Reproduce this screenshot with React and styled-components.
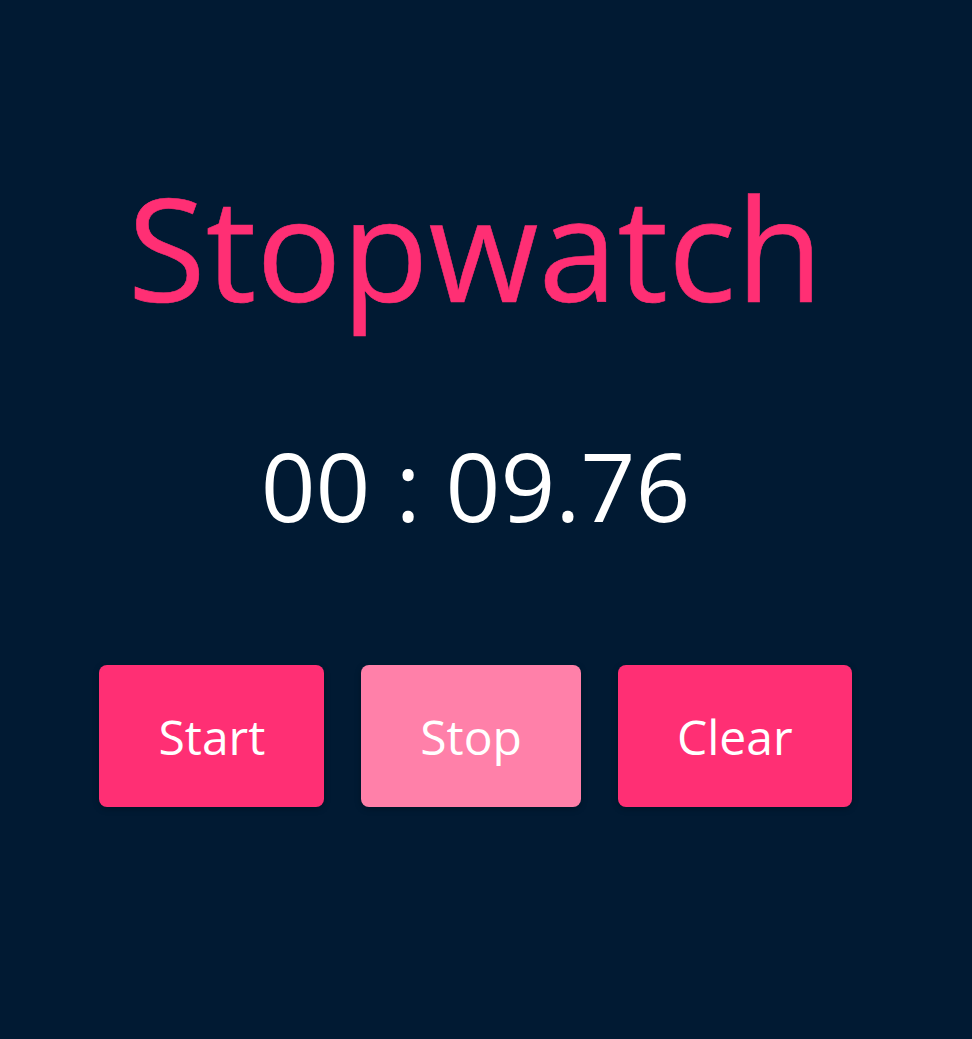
import React, { useState, useRef, useEffect } from 'react';
import styled, { createGlobalStyle } from 'styled-components';

const GlobalStyle = createGlobalStyle`
  html, body {
    margin: 0;
    padding: 0;
    background: #011a33;
  }
  body {
    font-family: "Open Sans", "Noto Sans", sans-serif;
  }
`;

const Page = styled.div`
  min-height: 1039px;
  box-sizing: border-box;
  padding: 162px 21px 0 0;
  display: flex;
  flex-direction: column;
  align-items: center;
`;

const Title = styled.h1`
  margin: 0;
  font-size: 142px;
  font-weight: 400;
  line-height: 170px;
  color: #ff2f74;
  -webkit-text-stroke: 0.6px #ff2f74;
`;

const Time = styled.div`
  margin-top: 95px;
  font-size: 96px;
  line-height: 115px;
  color: #fff;
`;

const Controls = styled.div`
  margin-top: 123px;
  display: flex;
  gap: 37px;
`;

const Button = styled.button`
  height: 142px;
  padding: 0 59px;
  border: none;
  border-radius: 8px;
  font-family: inherit;
  font-size: 48px;
  color: #fff;
  cursor: pointer;
  background: ${p => (p.$muted ? '#ff80a9' : '#ff2f74')};
  box-shadow: 0 2px 6px rgba(0, 0, 0, 0.25);
`;

const pad = n => String(n).padStart(2, '0');

export default function App() {
  const [ms, setMs] = useState(9760);
  const [running, setRunning] = useState(false);
  const ref = useRef(null);

  useEffect(() => {
    if (!running) return;
    ref.current = setInterval(() => setMs(v => v + 10), 10);
    return () => clearInterval(ref.current);
  }, [running]);

  const mins = Math.floor(ms / 60000);
  const secs = Math.floor((ms % 60000) / 1000);
  const cs = Math.floor((ms % 1000) / 10);

  return (
    <Page>
      <GlobalStyle />
      <Title>Stopwatch</Title>
      <Time>{pad(mins)} : {pad(secs)}.{pad(cs)}</Time>
      <Controls>
        <Button onClick={() => setRunning(true)}>Start</Button>
        <Button $muted onClick={() => setRunning(false)}>Stop</Button>
        <Button onClick={() => { setRunning(false); setMs(0); }}>Clear</Button>
      </Controls>
    </Page>
  );
}
